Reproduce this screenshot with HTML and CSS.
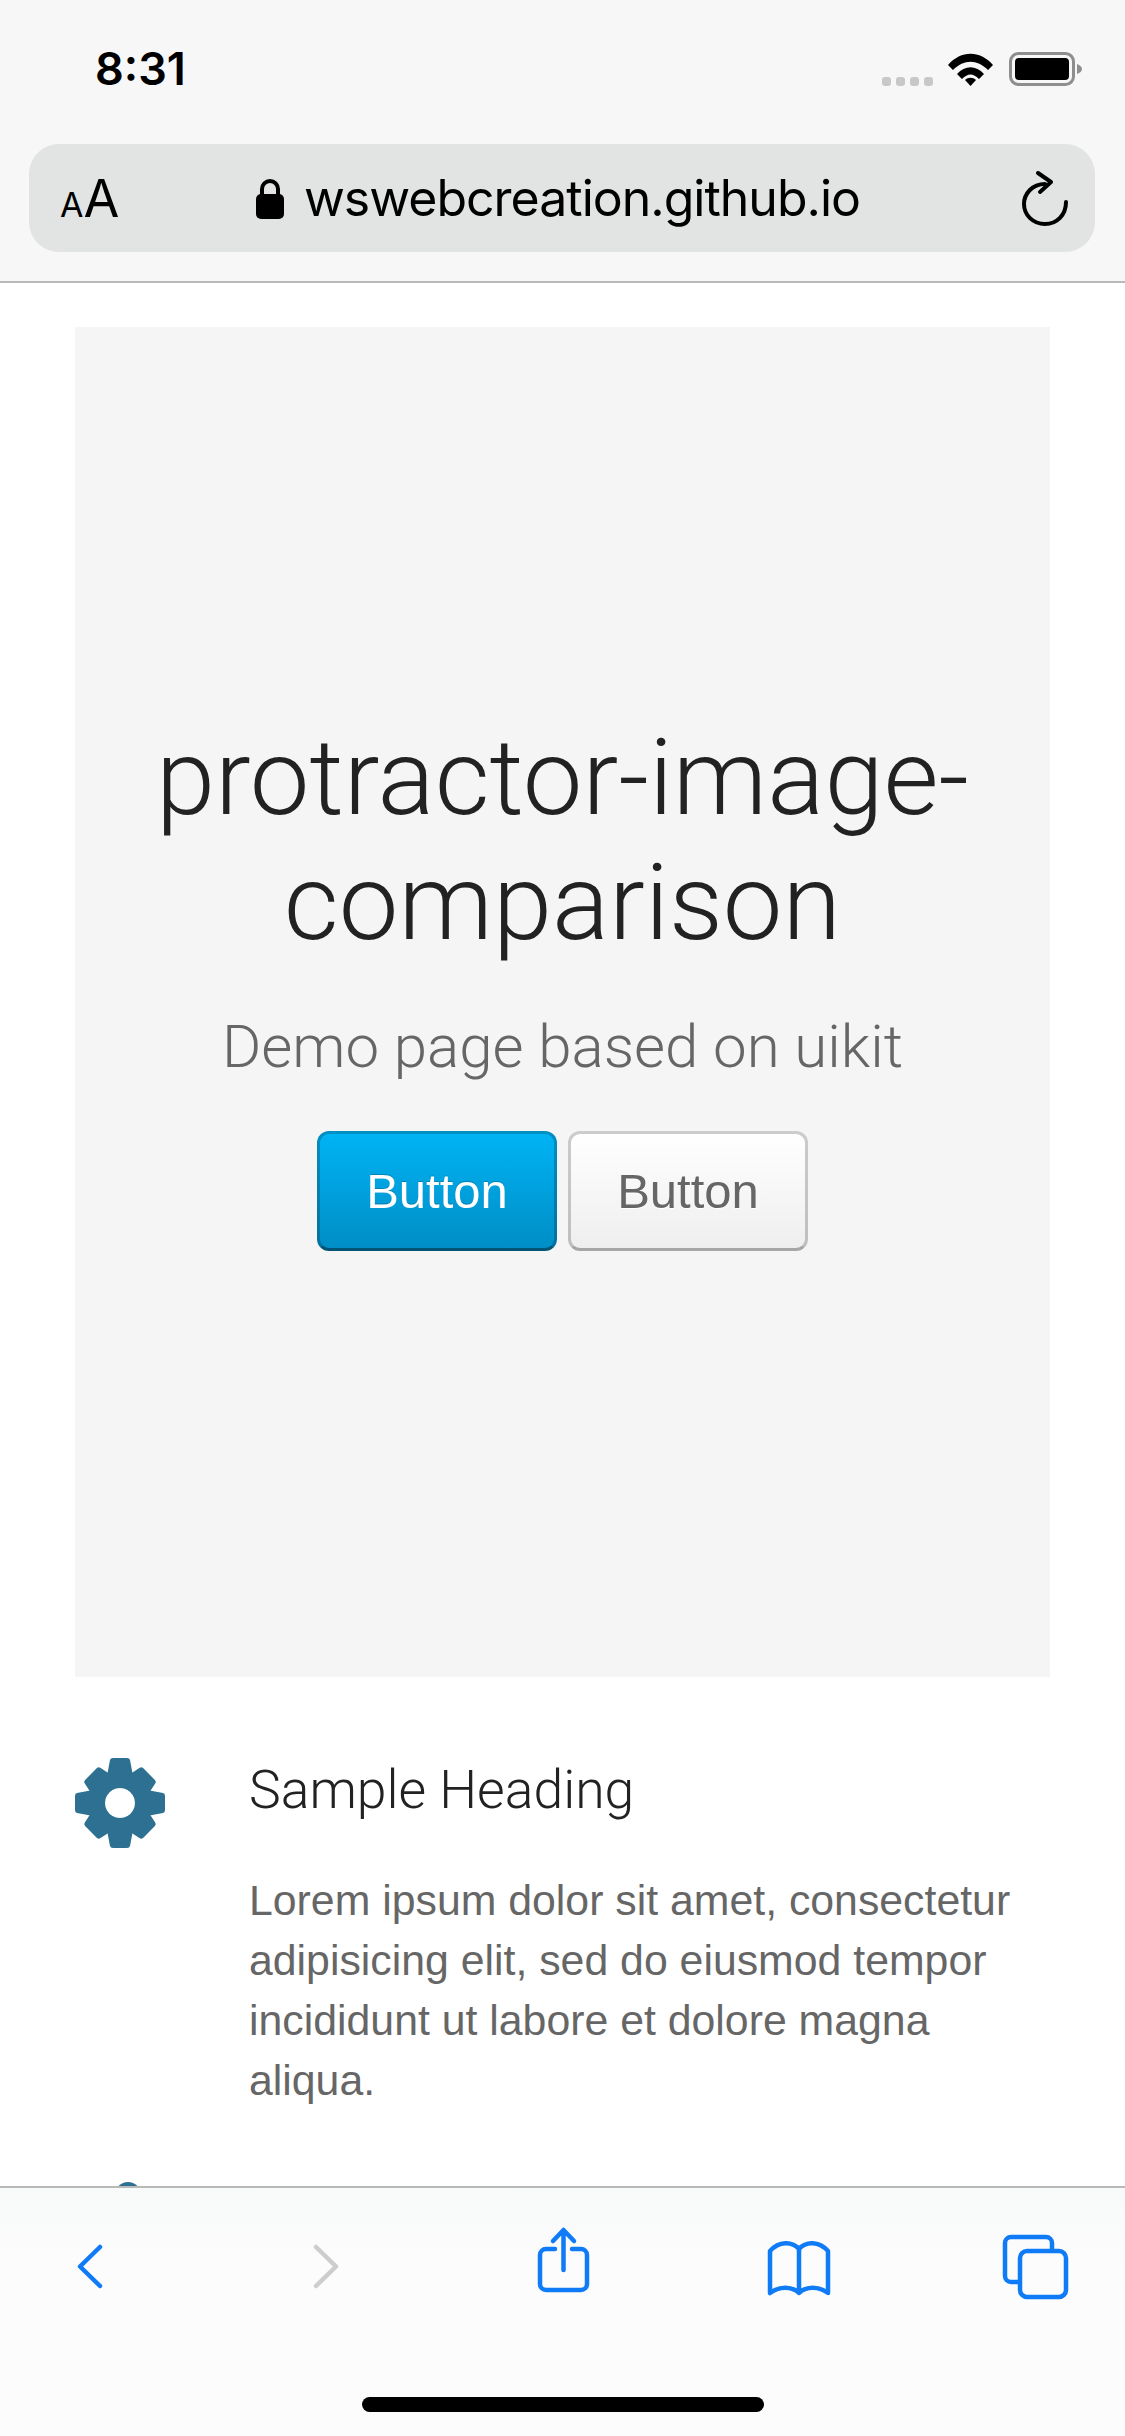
FILE: index.html
```html
<!doctype html>
<html lang="en">

<head>
  <meta charset="utf-8">
  <meta name="viewport" content="width=device-width, initial-scale=1">
  <title>protractor-image-comparison</title>
  <link rel="stylesheet" href="styles.css">
</head>

<body>
  <div class="screen">
    <header class="browser-top">
      <div class="status-bar">
        <span class="time">8:31</span>
        <div class="status-icons">
          <div class="signal"><i></i><i></i><i></i><i></i></div>
          <svg class="wifi" width="45" height="33" viewBox="0 0 45 33">
            <path d="M0 12 C13 -3 32 -3 45 12 L40 17 C29 6 16 6 5 17 Z" />
            <path d="M9 21 C17 12 28 12 36 21 L31 26 C25 20 20 20 14 26 Z" />
            <path d="M17 27 C20 24 25 24 28 27 L22.500 33 Z" />
          </svg>
          <svg class="battery" width="73" height="34" viewBox="0 0 73 34">
            <rect x="1.500" y="1.500" width="63" height="31" rx="8" fill="none" stroke="#8e8e8e" stroke-width="3" />
            <rect x="6" y="6" width="54" height="22" rx="4" />
            <path d="M68 12 C71 13 73 15 73 17 C73 19 71 21 68 22 Z" fill="#8e8e8e" />
          </svg>
        </div>
      </div>
      <div class="url-bar">
        <span class="text-size"><small>A</small>A</span>
        <div class="url">
          <svg width="28" height="41" viewBox="0 0 28 41">
            <path d="M6 18 V11 a8 8 0 0 1 16 0 V18" fill="none" stroke="#000" stroke-width="4" />
            <rect y="16" width="28" height="25" rx="5" />
          </svg>
          <span>wswebcreation.github.io</span>
        </div>
        <svg class="reload" width="48" height="56" viewBox="0 0 48 56" fill="none" stroke="#000" stroke-width="4" stroke-linecap="round" stroke-linejoin="round">
          <path d="M24 14 C11 14 3 24 3 34 C3 45 12 54 24 54 C36 54 45 45 45 32" />
          <path d="M17 3 L30 12 L19 22" />
        </svg>
      </div>
    </header>

    <main class="page">
      <section class="hero">
        <h1>protractor-image-<br>comparison</h1>
        <p class="lead">Demo page based on uikit</p>
        <div class="buttons">
          <a class="btn btn-primary">Button</a>
          <a class="btn">Button</a>
        </div>
      </section>

      <section class="feature">
        <svg class="feature-icon" width="90" height="90" viewBox="0 0 90 90">
          <defs>
            <path id="tooth" d="M32 18 L35 2 Q35.500 0 38 0 H52 Q54.500 0 55 2 L58 18 Z" />
            <path id="tooth-diag" d="M31 20 L34 6 Q34.500 4 37 4 H53 Q55.500 4 56 6 L59 20 Z" />
          </defs>
          <path fill-rule="evenodd" d="M45 16 a29 29 0 1 0 0.010 0 Z M45 30 a15 15 0 1 1 -0.010 0 Z" />
          <use href="#tooth" />
          <use href="#tooth" transform="rotate(90 45 45)" />
          <use href="#tooth" transform="rotate(180 45 45)" />
          <use href="#tooth" transform="rotate(270 45 45)" />
          <use href="#tooth-diag" transform="rotate(45 45 45)" />
          <use href="#tooth-diag" transform="rotate(135 45 45)" />
          <use href="#tooth-diag" transform="rotate(225 45 45)" />
          <use href="#tooth-diag" transform="rotate(315 45 45)" />
        </svg>
        <div>
          <h3>Sample Heading</h3>
          <p>Lorem ipsum dolor sit amet, consectetur adipisicing elit, sed do eiusmod tempor incididunt ut labore et dolore magna aliqua.</p>
        </div>
      </section>

      <section class="feature">
        <svg class="feature-icon" width="90" height="90" viewBox="0 0 90 90">
          <circle cx="53" cy="13" r="13" />
        </svg>
      </section>
    </main>

    <footer class="toolbar">
      <div class="tools">
        <svg width="70" height="80" viewBox="0 0 70 80" fill="none" stroke="#0f7bf6" stroke-width="4.500" stroke-linecap="round" stroke-linejoin="round">
          <path d="M45 21 L25 40.500 L45 60" />
        </svg>
        <svg width="70" height="80" viewBox="0 0 70 80" fill="none" stroke="#cdcdcd" stroke-width="4.500" stroke-linecap="round" stroke-linejoin="round">
          <path d="M25 21 L45 40.500 L25 60" />
        </svg>
        <svg width="70" height="80" viewBox="0 0 70 80" fill="none" stroke="#0f7bf6" stroke-width="4.500" stroke-linecap="round" stroke-linejoin="round">
          <path d="M27 23 H18 a6 6 0 0 0 -6 6 V58 a6 6 0 0 0 6 6 H53 a6 6 0 0 0 6 -6 V29 a6 6 0 0 0 -6 -6 H44" />
          <path d="M35.500 5 V44 M25 15 L35.500 4 L46 15" />
        </svg>
        <svg width="70" height="80" viewBox="0 0 70 80" fill="none" stroke="#0f7bf6" stroke-width="4.500" stroke-linecap="round" stroke-linejoin="round">
          <path d="M35 23 V67 C28 60 15 60 6 67 V25 C15 15 28 15 35 23 C42 15 55 15 64 25 V67 C55 60 42 60 35 67" />
        </svg>
        <svg width="70" height="80" viewBox="0 0 70 80" fill="none" stroke="#0f7bf6" stroke-width="4.500" stroke-linecap="round" stroke-linejoin="round">
          <path d="M52 23 V17 a6 6 0 0 0 -6 -6 H11 a6 6 0 0 0 -6 6 V50 a6 6 0 0 0 6 6 H18" />
          <rect x="20" y="25" width="46" height="46" rx="7" />
        </svg>
      </div>
      <div class="home-bar"></div>
    </footer>
  </div>
</body>
</html>
```

FILE: styles.css
```css
* {
  box-sizing: border-box;
}
body {
  margin: 0;
  background: #fff;
  font-family: "Liberation Sans", Arial, sans-serif;
}
.screen {
  position: relative;
  height: 2436px;
  overflow: hidden;
  display: flex;
  flex-direction: column;
}

/* browser chrome */
.browser-top {
  height: 283px;
  padding: 0 30px 0 29px;
  background: #f7f7f7;
  border-bottom: 2px solid #b9b9b9;
  flex-shrink: 0;
}
.status-bar {
  height: 144px;
  padding: 43px 13px 0 66px;
  display: flex;
  justify-content: space-between;
  align-items: flex-start;
}
.time {
  font-family: Inter, sans-serif;
  font-weight: 600;
  font-size: 45px;
  line-height: 52px;
  color: #000;
}
.status-icons {
  display: flex;
  align-items: flex-end;
  margin-top: 9px;
}
.signal {
  display: flex;
  gap: 5px;
  margin-right: 15px;
}
.signal i {
  width: 9px;
  height: 9px;
  border-radius: 3px;
  background: #c8c8c8;
}
.wifi {
  margin-right: 16px;
}
.url-bar {
  height: 108px;
  padding: 0 26px 0 31px;
  border-radius: 30px;
  background: #e2e4e3;
  display: flex;
  align-items: center;
  justify-content: space-between;
}
.text-size {
  font-family: Inter, sans-serif;
  font-size: 52px;
  color: #000;
  width: 60px;
}
.text-size small {
  font-size: 34px;
}
.url {
  display: flex;
  align-items: center;
  gap: 20px;
  margin-right: 25px;
  font-family: Inter, sans-serif;
  font-size: 50px;
  letter-spacing: -1px;
  color: #000;
}

/* page content */
.page {
  padding: 44px 75px 0;
}
.hero {
  height: 1350px;
  padding-top: 388px;
  background: #f5f5f5;
  text-align: center;
}
h1 {
  margin: 0;
  font-family: Roboto, sans-serif;
  font-weight: 300;
  font-size: 106.500px;
  line-height: 125px;
  color: #222;
}
.lead {
  margin: 46px 0 0;
  font-family: Roboto, sans-serif;
  font-weight: 300;
  font-size: 60px;
  line-height: 72px;
  color: #666;
}
.buttons {
  margin-top: 48px;
  display: flex;
  justify-content: center;
  gap: 11px;
}
.btn {
  width: 240px;
  height: 120px;
  border: 3px solid rgba(0, 0, 0, .2);
  border-bottom-color: rgba(0, 0, 0, .3);
  border-radius: 12px;
  background: linear-gradient(to bottom, #fff, #eee);
  background-origin: border-box;
  font-size: 49px;
  line-height: 114px;
  color: #666;
  text-shadow: 0 1px 0 #fff;
}
.btn-primary {
  border-color: rgba(0, 0, 0, .2);
  border-bottom-color: rgba(0, 0, 0, .4);
  background: linear-gradient(to bottom, #00b4f5, #008dc5);
  background-origin: border-box;
  color: #fff;
  text-shadow: 0 -1px 0 rgba(0, 0, 0, .2);
}
.feature {
  margin-top: 81px;
  display: grid;
  grid-template-columns: 90px 1fr;
  column-gap: 84px;
}
.feature + .feature {
  margin-top: 72px;
}
.feature-icon {
  fill: #2d7091;
}
h3 {
  margin: -4px 0 44px;
  font-family: Roboto, sans-serif;
  font-weight: 300;
  font-size: 53.500px;
  line-height: 72px;
  color: #222;
}
.feature p {
  margin: 0;
  font-size: 42.800px;
  line-height: 60px;
  color: #666;
}

/* sits over the page */
.toolbar {
  position: absolute;
  left: 0;
  right: 0;
  bottom: 0;
  height: 250px;
  padding-top: 38px;
  border-top: 2px solid #b9b9b9;
  background: linear-gradient(to bottom, #f8f9f9, #fcfcfc 30%);
}
.tools {
  padding: 0 55px;
  display: flex;
  justify-content: space-between;
}
.home-bar {
  width: 402px;
  height: 15px;
  margin: 91px auto 0;
  border-radius: 8px;
  background: #000;
}
```
